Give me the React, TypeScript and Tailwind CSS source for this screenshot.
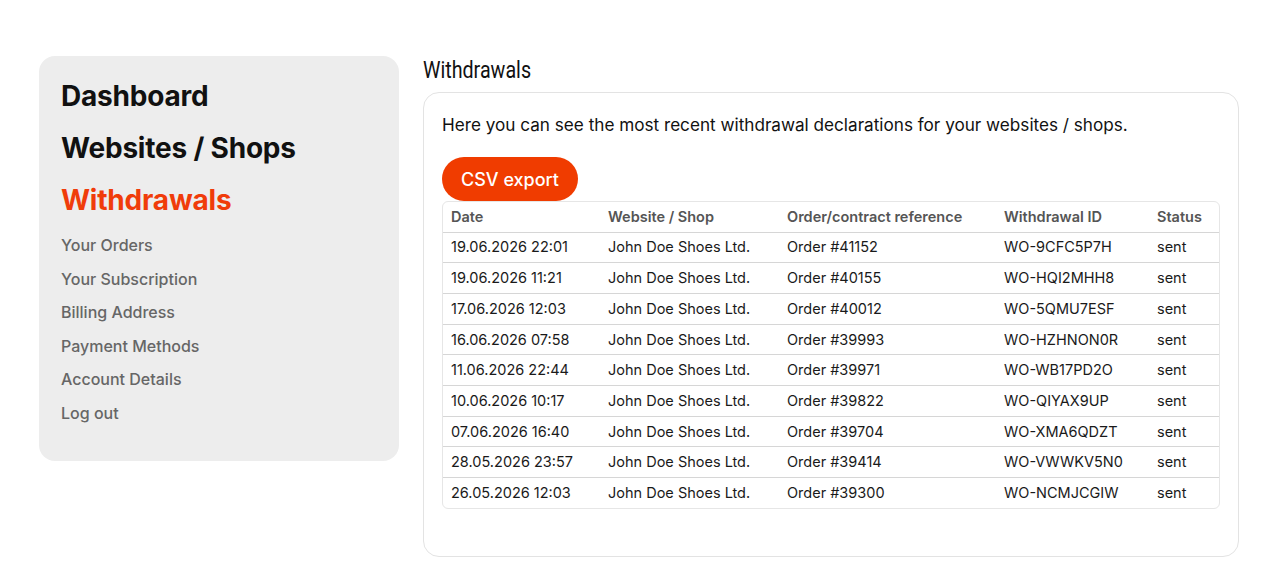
import React from "react";

type Withdrawal = {
  date: string;
  shop: string;
  order: string;
  id: string;
  status: string;
};

const rows: Withdrawal[] = [
  { date: "19.06.2026 22:01", shop: "John Doe Shoes Ltd.", order: "Order #41152", id: "WO-9CFC5P7H", status: "sent" },
  { date: "19.06.2026 11:21", shop: "John Doe Shoes Ltd.", order: "Order #40155", id: "WO-HQI2MHH8", status: "sent" },
  { date: "17.06.2026 12:03", shop: "John Doe Shoes Ltd.", order: "Order #40012", id: "WO-5QMU7ESF", status: "sent" },
  { date: "16.06.2026 07:58", shop: "John Doe Shoes Ltd.", order: "Order #39993", id: "WO-HZHNON0R", status: "sent" },
  { date: "11.06.2026 22:44", shop: "John Doe Shoes Ltd.", order: "Order #39971", id: "WO-WB17PD2O", status: "sent" },
  { date: "10.06.2026 10:17", shop: "John Doe Shoes Ltd.", order: "Order #39822", id: "WO-QIYAX9UP", status: "sent" },
  { date: "07.06.2026 16:40", shop: "John Doe Shoes Ltd.", order: "Order #39704", id: "WO-XMA6QDZT", status: "sent" },
  { date: "28.05.2026 23:57", shop: "John Doe Shoes Ltd.", order: "Order #39414", id: "WO-VWWKV5N0", status: "sent" },
  { date: "26.05.2026 12:03", shop: "John Doe Shoes Ltd.", order: "Order #39300", id: "WO-NCMJCGIW", status: "sent" },
];

const mainLinks = [
  { label: "Dashboard", active: false },
  { label: "Websites / Shops", active: false },
  { label: "Withdrawals", active: true },
];

const accountLinks = [
  "Your Orders",
  "Your Subscription",
  "Billing Address",
  "Payment Methods",
  "Account Details",
  "Log out",
];

function Sidebar() {
  return (
    <aside className="w-[360px] shrink-0 self-start rounded-2xl bg-[#ededed] px-[22px] pt-[14px] pb-[30px]">
      <nav className="flex flex-col">
        {mainLinks.map((link) => (
          <a
            key={link.label}
            href="#"
            className={
              "text-[28px] font-bold leading-[52px] tracking-[-0.2px] " +
              (link.active ? "text-[#f03c0a]" : "text-[#111111]")
            }
          >
            {link.label}
          </a>
        ))}
      </nav>
      <nav className="mt-[3px] flex flex-col">
        {accountLinks.map((label) => (
          <a key={label} href="#" className="text-[16px] font-medium leading-[33.6px] text-[#666666]">
            {label}
          </a>
        ))}
      </nav>
    </aside>
  );
}

function WithdrawalTable() {
  return (
    <div className="overflow-hidden rounded-md border border-[#e6e6e6]">
      <table className="w-full table-fixed border-collapse text-left text-[14.5px]">
        <colgroup>
          <col className="w-[157px]" />
          <col className="w-[179px]" />
          <col className="w-[217px]" />
          <col className="w-[153px]" />
          <col />
        </colgroup>
        <thead>
          <tr className="h-[30px] border-b border-[#d6d6d6]">
            <th className="px-[8px] font-semibold text-[#555555]">Date</th>
            <th className="px-[8px] font-semibold text-[#555555]">Website / Shop</th>
            <th className="px-[8px] font-semibold text-[#555555]">Order/contract reference</th>
            <th className="px-[8px] font-semibold text-[#555555]">Withdrawal ID</th>
            <th className="px-[8px] font-semibold text-[#555555]">Status</th>
          </tr>
        </thead>
        <tbody className="text-[#1a1a1a]">
          {rows.map((r, i) => (
            <tr key={r.id} className={"h-[30.7px] " + (i < rows.length - 1 ? "border-b border-[#d6d6d6]" : "")}>
              <td className="px-[8px]">{r.date}</td>
              <td className="px-[8px]">{r.shop}</td>
              <td className="px-[8px]">{r.order}</td>
              <td className="px-[8px]">{r.id}</td>
              <td className="px-[8px]">{r.status}</td>
            </tr>
          ))}
        </tbody>
      </table>
    </div>
  );
}

export default function App() {
  return (
    <div className="min-h-screen bg-white font-['Inter','Liberation_Sans',sans-serif]">
      <div className="flex gap-[24px] pl-[39px] pr-[29px] pt-[56px]">
        <Sidebar />
        <main className="flex-1">
          <h1 className="origin-left scale-x-[0.82] font-['Roboto','Liberation_Sans',sans-serif] text-[24px] leading-[28px] text-[#111111]">
            Withdrawals
          </h1>
          <section className="mt-[8px] rounded-2xl border border-[#e3e3e3] px-[18px] pt-[20px] pb-[47px]">
            <p className="text-[17.15px] leading-[24px] text-[#111111]">
              Here you can see the most recent withdrawal declarations for your websites / shops.
            </p>
            <button
              type="button"
              className="mt-[20px] h-[44px] rounded-full bg-[#f03c00] px-[19px] text-[18px] font-medium text-white"
            >
              CSV export
            </button>
            <WithdrawalTable />
          </section>
        </main>
      </div>
    </div>
  );
}
